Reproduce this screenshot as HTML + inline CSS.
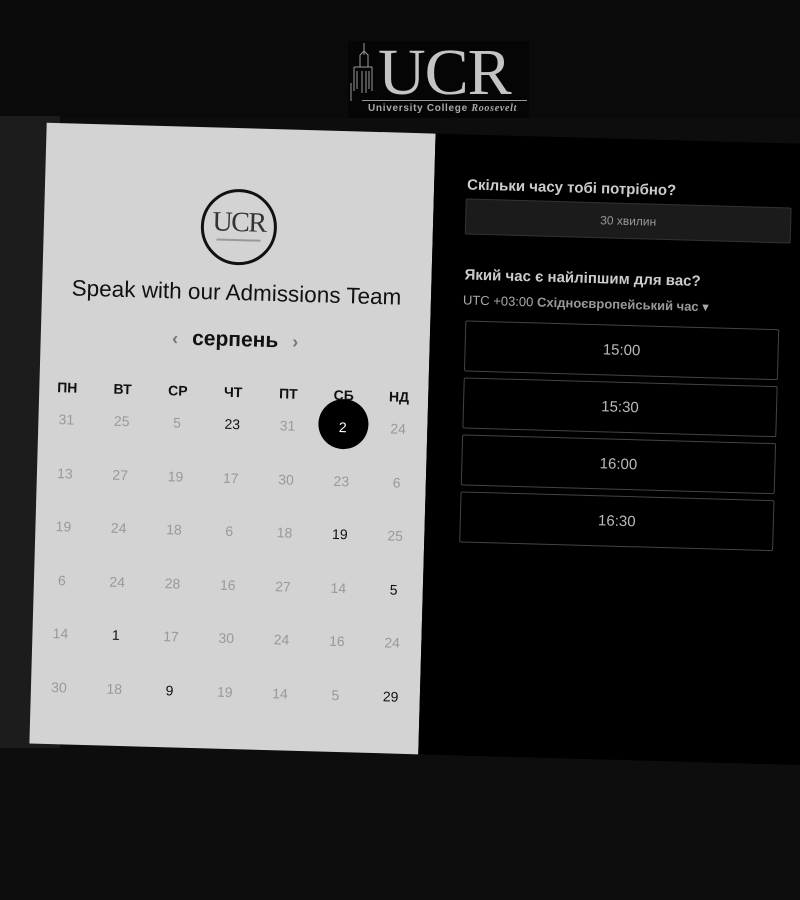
<!DOCTYPE html>
<html><head><meta charset="utf-8"><style>
*{margin:0;padding:0;box-sizing:border-box}
body{width:800px;height:900px;background:#0d0d0d;position:relative;overflow:hidden;font-family:"Liberation Sans","DejaVu Sans",sans-serif}
.top{position:absolute;left:0;top:0;width:800px;height:118px;background:#0a0a0a}
.strip{position:absolute;left:0;top:116px;width:60px;height:632px;background:#1c1c1c}
.logo{position:absolute;left:348px;top:41px;width:181px;height:77px;background:#050505}
.logo .u{position:absolute;left:30px;top:0px;font-family:"Liberation Serif",serif;font-size:66px;line-height:64px;color:#c4c4c4;letter-spacing:-1px}
.logo .s{position:absolute;left:20px;top:62px;font-size:10px;color:#aaa;font-weight:bold;letter-spacing:.7px;white-space:nowrap}
.logo .s i{font-family:"Liberation Serif",serif}
.logo .ln{position:absolute;left:14px;top:59px;width:165px;height:1px;background:#999}
.logo svg{position:absolute;left:0;top:0}
.card{position:absolute;left:38px;top:128px;width:900px;height:621px;transform:rotate(1.6deg);transform-origin:194px 310px}
.lp{position:absolute;left:0;top:0;width:389px;height:621px;background:#d3d3d3}
.rp{position:absolute;left:389px;top:0;width:520px;height:621px;background:#000}
.circ{position:absolute;left:157px;top:61px;width:76px;height:76px;border:3px solid #111;border-radius:50%;text-align:center}
.circ b{display:block;font-family:"Liberation Serif",serif;font-weight:normal;font-size:28px;color:#333;margin-top:15px;letter-spacing:-1.5px}
.circ i{display:block;width:44px;height:2px;background:#999;margin:0 auto}
.title{position:absolute;left:0;width:389px;top:152px;text-align:center;font-size:22.5px;color:#111}
.nav{position:absolute;left:0;width:389px;top:200px;text-align:center;font-size:21px;color:#111;font-weight:bold}
.nav span{color:#777;font-size:18px;margin:0 14px}
.c{position:absolute;width:50px;text-align:center;transform:translate(-25px,-50%)}
.h{font-weight:bold;font-size:14px;color:#111}
.d{font-size:14px;color:#999}
.k{color:#111}
.sel{position:absolute;width:50px;height:50px;border-radius:50%;background:#000;transform:translate(-25px,-25px)}
.lbl{position:absolute;left:422px;font-weight:bold;font-size:15px;color:#ccc}
.box{position:absolute;left:421px;top:64px;width:326px;height:36px;background:#1b1b1b;border:1px solid #333;border-radius:2px;color:#999;font-size:12px;text-align:center;line-height:34px}
.utc{position:absolute;left:421px;top:158px;font-size:13px;color:#aaa}
.utc b{color:#999}
.slot{position:absolute;left:424px;width:314px;height:51px;border:1px solid #444;border-radius:2px;color:#bbb;font-size:15px;text-align:center;line-height:49px}
</style></head><body>
<div class="top"></div>
<div class="strip"></div>
<div class="logo">
<svg width="30" height="77" stroke="#999" fill="none" stroke-width="1"><path d="M16 2V14M12 14L16 10L20 14V26M12 14V26M6 26H24V50M6 26V50M9 30V48M21 30V48M14 30V52M18 30V52M3 42V60"/></svg>
<div class="u">UCR</div><div class="ln"></div><div class="s">University College <i>Roosevelt</i></div></div>
<div class="card">
<div class="lp">
<div class="circ"><b>UCR</b><i></i></div>
<div class="title">Speak with our Admissions Team</div>
<div class="nav"><span>‹</span>серпень<span>›</span></div>
<div class="sel" style="left:305px;top:293px"></div>
<div id="g"></div>
</div>
<div class="rp"></div>
<div class="lbl" style="top:42px">Скільки часу тобі потрібно?</div>
<div class="box">30 хвилин</div>
<div class="lbl" style="top:132px">Який час є найліпшим для вас?</div>
<div class="utc">UTC +03:00 <b>Східноєвропейський час</b> ▾</div>
<div class="slot" style="top:186px">15:00</div>
<div class="slot" style="top:243px">15:30</div>
<div class="slot" style="top:300px">16:00</div>
<div class="slot" style="top:357px">16:30</div>
</div>
<script>
var g=document.getElementById('g'),h=["ПН","ВТ","СР","ЧТ","ПТ","СБ","НД"];
var d=[[31,25,5,23,31,2,24],[13,27,19,17,30,23,6],[19,24,18,6,18,19,25],[6,24,28,16,27,14,5],[14,1,17,30,24,16,24],[30,18,9,19,14,5,29]];
var k={"0,3":1,"2,5":1,"3,6":1,"4,1":1,"5,2":1,"5,6":1};
var s="";
for(var i=0;i<7;i++){var x=28+i*55.3;s+='<div class="c h" style="left:'+x+'px;top:264px">'+h[i]+'</div>';
for(var r=0;r<6;r++){var y=296+r*53.5;var cl="c d"+(k[r+","+i]?" k":"");var st="";if(r==0&&i==5){st="color:#fff;";}
s+='<div class="'+cl+'" style="'+st+'left:'+x+'px;top:'+y+'px">'+d[r][i]+'</div>';}}
g.innerHTML=s;
</script>
</body></html>
